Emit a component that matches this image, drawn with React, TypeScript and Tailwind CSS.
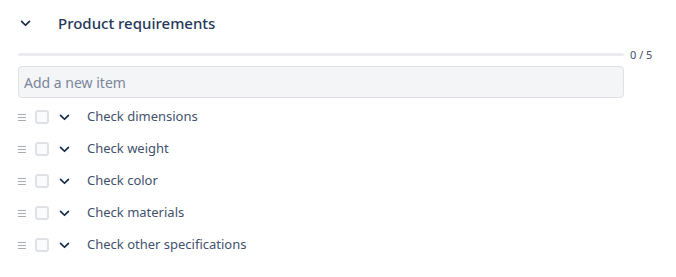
import React from "react";

const Chevron = ({ className = "" }: { className?: string }) => (
  <svg viewBox="0 0 12 8" className={className} fill="none">
    <path d="M1.5 1.5 L6 6 L10.5 1.5" stroke="#172b4d" strokeWidth="2" strokeLinecap="round" strokeLinejoin="round" />
  </svg>
);

const items = [
  "Check dimensions",
  "Check weight",
  "Check color",
  "Check materials",
  "Check other specifications",
];

export default function App() {
  return (
    <div className="w-[676px] h-[277px] bg-white pl-[18px] pr-[22px] pt-[8px]" style={{ fontFamily: '"Noto Sans", sans-serif' }}>
      <div className="flex items-center h-[30px]">
        <Chevron className="w-[11px] h-[7px] ml-[2px]" />
        <span className="ml-[27px] text-[15px] font-medium text-[#253858]">Product requirements</span>
      </div>
      <div className="flex items-center mt-[10px] h-[12px]">
        <div className="flex-1 h-[3px] bg-[#ebecf0] rounded-full" />
        <span className="ml-[6px] text-[11px] text-[#42526e] leading-none w-[24px]">0 / 5</span>
      </div>
      <div className="mt-[6px] w-[606px] h-[32px] rounded-[4px] border border-[#dfe1e6] bg-[#f4f5f7] flex items-center pl-[5px] text-[14px] text-[#7a869a]">
        Add a new item
      </div>
      <div className="mt-[3px] flex flex-col">
        {items.map((t) => (
          <div key={t} className="flex items-center h-[32px]">
            <span className="w-[8px] flex flex-col gap-[2px]">
              <span className="h-px bg-[#a5adba]" />
              <span className="h-px bg-[#a5adba]" />
              <span className="h-px bg-[#a5adba]" />
            </span>
            <span className="ml-[9px] w-[14px] h-[14px] rounded-[3px] border-2 border-[#dfe1e6] bg-[#fafbfc]" />
            <Chevron className="ml-[10px] w-[11px] h-[7px]" />
            <span className="ml-[17px] text-[13px] text-[#42526e]">{t}</span>
          </div>
        ))}
      </div>
    </div>
  );
}
